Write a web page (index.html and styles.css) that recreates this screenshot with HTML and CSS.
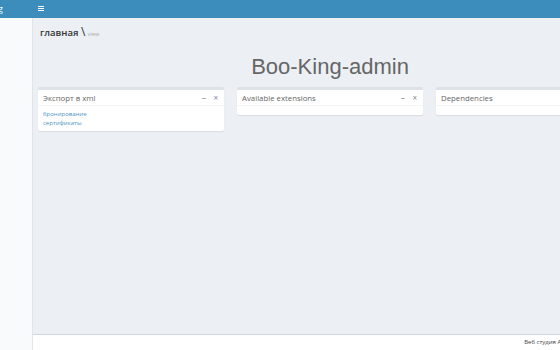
FILE: index.html
```html
<!DOCTYPE html>
<html lang="ru">
<head>
    <meta charset="UTF-8">
    <title>Boo-King-admin</title>
    <link rel="stylesheet" href="styles.css">
</head>
<body>
    <div class="wrapper">
        <header class="main-header">
            <div class="logo"><span class="logo-clip"><b>Boo</b>King</span></div>
            <nav class="navbar">
                <svg class="toggle" width="6" height="5" viewBox="0 0 6 5">
                    <rect x="0" y="0" width="6" height="1" fill="#fff"/>
                    <rect x="0" y="2" width="6" height="1" fill="#fff"/>
                    <rect x="0" y="4" width="6" height="1" fill="#fff"/>
                </svg>
            </nav>
        </header>

        <div class="page">
            <aside class="sidebar"></aside>

            <div class="content-wrapper">
                <section class="content-header">
                    <h1>главная <span class="sep">\</span> <small>view</small></h1>
                </section>

                <section class="content">
                    <h2 class="site-title">Boo-King-admin</h2>

                    <div class="row">
                        <div class="box">
                            <div class="box-header">
                                <h3>Экспорт в xml</h3>
                                <div class="box-tools">
                                    <span>&minus;</span>
                                    <span>&times;</span>
                                </div>
                            </div>
                            <div class="box-body">
                                <a href="#">бронирование</a>
                                <a href="#">сертификаты</a>
                            </div>
                        </div>

                        <div class="box">
                            <div class="box-header">
                                <h3>Available extensions</h3>
                                <div class="box-tools">
                                    <span>&minus;</span>
                                    <span>&times;</span>
                                </div>
                            </div>
                            <div class="box-body empty"></div>
                        </div>

                        <div class="box">
                            <div class="box-header">
                                <h3>Dependencies</h3>
                                <div class="box-tools">
                                    <span>&minus;</span>
                                    <span>&times;</span>
                                </div>
                            </div>
                            <div class="box-body empty"></div>
                        </div>
                    </div>
                </section>

                <footer class="main-footer">
                    Веб студия Алекс
                </footer>
            </div>
        </div>
    </div>
</body>
</html>
```

FILE: styles.css
```css
body {
    margin: 0;
    padding: 0;
    overflow: hidden;
    font-family: "Open Sans", "Noto Sans", Arial, sans-serif;
    background-color: #ecf0f5;
    color: #333;
}
.wrapper {
    width: 627px;
    height: 350px;
    display: flex;
    flex-direction: column;
}
.main-header {
    display: flex;
    height: 18px;
    background-color: #3c8dbc;
    flex-shrink: 0;
}
.logo {
    width: 33px;
    flex-shrink: 0;
}
.logo-clip {
    display: flex;
    justify-content: flex-end;
    width: 3px;
    overflow: hidden;
    color: #fff;
    font-size: 9px;
    line-height: 18px;
    white-space: nowrap;
}
.navbar {
    padding: 6px 0 0 5px;
}
.toggle {
    display: block;
}
.page {
    flex: 1;
    display: flex;
}
.sidebar {
    width: 32px;
    flex-shrink: 0;
    background-color: #f9fafc;
    border-right: 1px solid #e1e4ea;
}
.content-wrapper {
    flex: 1;
    display: flex;
    flex-direction: column;
    min-width: 0;
}
.content-header {
    padding: 7px 7px 0;
}
.content-header h1 {
    margin: 0;
    font-size: 9.5px;
    font-weight: 600;
    color: #333;
    line-height: 14px;
}
.content-header .sep {
    font-weight: 400;
    font-size: 12px;
}
.content-header small {
    font-size: 5.5px;
    font-weight: 400;
    color: #aaa;
}
.content {
    flex: 1;
    padding: 0 5px;
}
.site-title {
    margin: 13px 0 7px;
    text-align: center;
    font-family: "Liberation Sans", Arial, sans-serif;
    font-weight: 400;
    font-size: 22px;
    color: #666;
    line-height: 26px;
}
.row {
    display: grid;
    grid-template-columns: repeat(3, 186px);
    gap: 13px;
    align-items: start;
}
.box {
    background-color: #fff;
    border-top: 3px solid #dde1e8;
    border-radius: 2px;
    box-shadow: 0 1px 1px rgba(0,0,0,0.08);
}
.box-header {
    display: flex;
    align-items: center;
    justify-content: space-between;
    height: 15px;
    padding: 0 6px 0 5px;
    border-bottom: 1px solid #f4f4f4;
}
.box-header h3 {
    margin: 0;
    font-size: 7.8px;
    font-weight: 400;
    color: #666;
}
.box-tools {
    display: flex;
    gap: 7px;
    color: #8a93a6;
    font-size: 8px;
    font-weight: 600;
}
.box-body {
    display: flex;
    flex-direction: column;
    padding: 4px 5px 3px;
}
.box-body.empty {
    height: 9px;
    padding: 0;
}
.box-body a {
    color: #4a96c6;
    text-decoration: none;
    font-size: 6px;
    line-height: 9px;
}
.main-footer {
    height: 15px;
    background-color: #fff;
    border-top: 1px solid #d2d6de;
    text-align: right;
    padding-right: 53px;
    font-size: 6px;
    line-height: 15px;
    color: #444;
}
```
